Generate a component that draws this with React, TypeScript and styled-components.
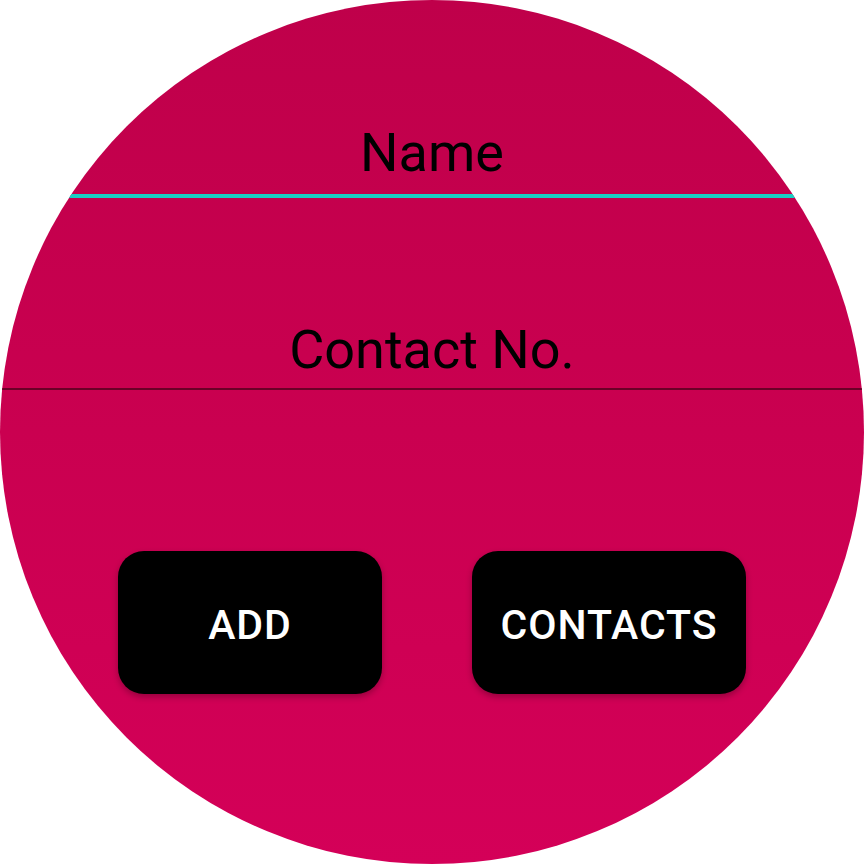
import React from "react";
import styled, { createGlobalStyle } from "styled-components";

const Global = createGlobalStyle`
  html, body { margin: 0; padding: 0; background: #ffffff; }
  body { font-family: Roboto, "Noto Sans", sans-serif; }
`;

const Screen = styled.div`
  width: 864px;
  height: 864px;
  border-radius: 50%;
  overflow: hidden;
  background: linear-gradient(180deg, #bf004a 0%, #ca0050 50%, #d40058 100%);
  display: flex;
  flex-direction: column;
  padding-top: 123px;
  box-sizing: border-box;
`;

const Field = styled.div<{ $gap: number; $mt: number }>`
  display: flex;
  flex-direction: column;
  align-items: stretch;
  margin-top: ${(p) => p.$mt}px;
  gap: ${(p) => p.$gap}px;
`;

const Label = styled.div`
  font-family: Roboto, sans-serif;
  font-size: 54px;
  line-height: 60px;
  color: #000000;
  text-align: center;
`;

const Underline = styled.div<{ $color: string; $h: number }>`
  height: ${(p) => p.$h}px;
  background: ${(p) => p.$color};
`;

const ButtonRow = styled.div`
  margin-top: 161px;
  display: flex;
  justify-content: center;
  gap: 90px;
`;

const Button = styled.button<{ $w: number }>`
  width: ${(p) => p.$w}px;
  height: 143px;
  border: none;
  border-radius: 26px;
  background: #000000;
  color: #ffffff;
  font-family: Roboto, sans-serif;
  font-weight: 500;
  font-size: 41px;
  letter-spacing: 1px;
  display: flex;
  align-items: center;
  justify-content: center;
  padding: 4px 0 0 0;
  box-sizing: border-box;
  box-shadow: 0 3px 6px rgba(0, 0, 0, 0.28);
`;

export default function App() {
  return (
    <>
      <Global />
      <Screen>
        <Field $gap={11} $mt={0}>
          <Label>Name</Label>
          <Underline $color="#1acec3" $h={4} />
        </Field>
        <Field $gap={8} $mt={122}>
          <Label>Contact No.</Label>
          <Underline $color="#6b0027" $h={2} />
        </Field>
        <ButtonRow>
          <Button $w={264}>ADD</Button>
          <Button $w={274}>CONTACTS</Button>
        </ButtonRow>
      </Screen>
    </>
  );
}
